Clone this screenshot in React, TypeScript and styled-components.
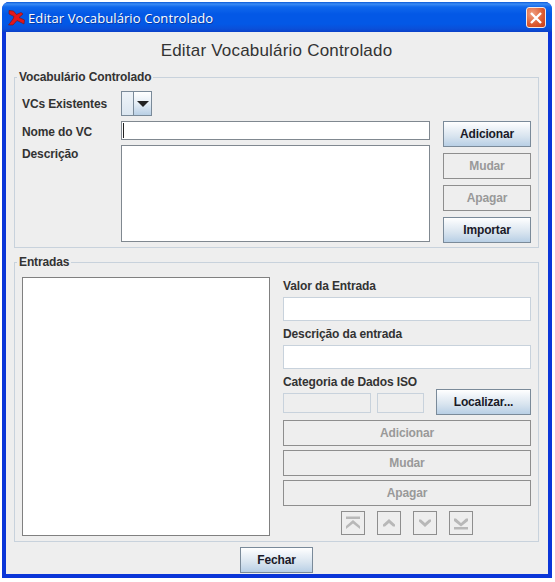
import styled, { createGlobalStyle } from "styled-components";

const GlobalStyle = createGlobalStyle`
    html, body {
        margin: 0;
        padding: 0;
        background: #ffffff;
    }
    * {
        box-sizing: border-box;
    }
`;

export default function App() {
    return (
        <Page>
            <GlobalStyle />
            <Window>
                <TitleBar>
                    <AppLogo />
                    <TitleText>Editar Vocabulário Controlado</TitleText>
                    <CloseButton>
                        <svg width="14" height="14" viewBox="0 0 14 14">
                            <path d="M2 2 L12 12 M12 2 L2 12" stroke="#fff" strokeWidth="2.4" />
                        </svg>
                    </CloseButton>
                </TitleBar>
                <Content>
                    <Heading>Editar Vocabulário Controlado</Heading>

                    <Group $height={178}>
                        <Legend>Vocabulário Controlado</Legend>
                        <VocabLayout>
                            <ComboRow>
                                <FieldLabel>VCs Existentes</FieldLabel>
                                <Combo>
                                    <ComboValue />
                                    <ComboArrow>
                                        <svg width="12" height="6" viewBox="0 0 12 6">
                                            <path d="M0 0 H12 L6 6 Z" fill="#222" />
                                        </svg>
                                    </ComboArrow>
                                </Combo>
                            </ComboRow>
                            <FormRow>
                                <FormFields>
                                    <NameRow>
                                        <FieldLabel $top={2}>Nome do VC</FieldLabel>
                                        <TextField $width={309} $height={19} $caret />
                                    </NameRow>
                                    <DescriptionRow>
                                        <FieldLabel $top={2}>Descrição</FieldLabel>
                                        <TextField $width={309} $height={97} />
                                    </DescriptionRow>
                                </FormFields>
                                <ButtonColumn>
                                    <Button $height={26}>Adicionar</Button>
                                    <Button $height={26} disabled>Mudar</Button>
                                    <Button $height={26} disabled>Apagar</Button>
                                    <Button $height={26}>Importar</Button>
                                </ButtonColumn>
                            </FormRow>
                        </VocabLayout>
                    </Group>

                    <Group $height={287} $gap={7}>
                        <Legend>Entradas</Legend>
                        <EntriesLayout>
                            <EntryList />
                            <EntryForm>
                                <EntryLabel>Valor da Entrada</EntryLabel>
                                <EntryField />
                                <EntryLabel>Descrição da entrada</EntryLabel>
                                <EntryField />
                                <EntryLabel>Categoria de Dados ISO</EntryLabel>
                                <IsoRow>
                                    <IsoField $width={88} />
                                    <IsoField $width={47} />
                                    <Button $height={26} $width={95}>Localizar...</Button>
                                </IsoRow>
                                <WideButtons>
                                    <Button $height={26} disabled>Adicionar</Button>
                                    <Button $height={26} disabled>Mudar</Button>
                                    <Button $height={26} disabled>Apagar</Button>
                                </WideButtons>
                                <MoveRow>
                                    <MoveButton disabled>
                                        <svg width="16" height="16" viewBox="0 0 16 16">
                                            <path d="M1 1.5 H15 V4 H1 Z M8 5 L15 11 V14 L8 8.5 L1 14 V11 Z" fill="#b8b8b8" />
                                        </svg>
                                    </MoveButton>
                                    <MoveButton disabled>
                                        <svg width="16" height="16" viewBox="0 0 16 16">
                                            <path d="M8 4 L14 9.5 V11.5 H12 L8 8 L4 11.5 H2 V9.5 Z" fill="#b8b8b8" />
                                        </svg>
                                    </MoveButton>
                                    <MoveButton disabled>
                                        <svg width="16" height="16" viewBox="0 0 16 16">
                                            <path d="M8 12 L14 6.5 V4.5 H12 L8 8 L4 4.5 H2 V6.5 Z" fill="#b8b8b8" />
                                        </svg>
                                    </MoveButton>
                                    <MoveButton disabled>
                                        <svg width="16" height="16" viewBox="0 0 16 16">
                                            <path d="M8 8 L13 3.5 H15 V6 L8 11.5 L1 6 V3.5 H3 Z M1 12 H15 V14.5 H1 Z" fill="#b8b8b8" />
                                        </svg>
                                    </MoveButton>
                                </MoveRow>
                            </EntryForm>
                        </EntriesLayout>
                    </Group>

                    <Footer>
                        <Button $height={26} $width={73}>Fechar</Button>
                    </Footer>
                </Content>
            </Window>
        </Page>
    );
}

function AppLogo() {
    return (
        <svg width="17" height="16" viewBox="0 0 17 16">
            <path
                d="M1 0.5 L5.5 1 L8.5 4.5 L13 2.5 L15 4 L11 7.5 L16.5 10 L16 14 L13 12.5 L9 10.5 L5 15 L0.5 15 L5 9 L6 6.5 L1 4 Z"
                fill="#e3161c"
                stroke="#701818"
                strokeWidth="0.6"
            />
        </svg>
    );
}

const Page = styled.div`
    width: 555px;
    height: 582px;
    padding: 2px 3px 4px 2px;
`;

const Window = styled.div`
    width: 550px;
    height: 576px;
    display: flex;
    flex-direction: column;
    border: solid #0a35d8;
    border-width: 0 4px 4px 4px;
    border-radius: 7px 7px 0 0;
    background: #0a35d8;
    font-family: "Liberation Sans", Arial, sans-serif;
`;

const TitleBar = styled.div`
    height: 30px;
    flex: none;
    margin: 0 -4px;
    padding: 1px 6px 0 6px;
    display: flex;
    align-items: center;
    gap: 3px;
    border-radius: 7px 7px 0 0;
    background: linear-gradient(
        180deg,
        #0a5ad8 0,
        #3c8cf4 2px,
        #1068ec 5px,
        #0358e6 12px,
        #0358e6 22px,
        #0a4fd8 27px,
        #0a3fc8 100%
    );
`;

const TitleText = styled.span`
    flex: 1;
    font-family: "Open Sans", "Liberation Sans", sans-serif;
    font-size: 13px;
    letter-spacing: 0.1px;
    color: #ffffff;
    white-space: nowrap;
    text-shadow: 1px 1px 0 #0a3aa0;
`;

const CloseButton = styled.div`
    width: 20px;
    height: 21px;
    display: flex;
    align-items: center;
    justify-content: center;
    border: 1px solid #f4e8e4;
    border-radius: 3px;
    background: radial-gradient(circle at 30% 30%, #f0a080, #dc5a30 60%, #c83c18);
`;

const Content = styled.div`
    flex: 1;
    display: flex;
    flex-direction: column;
    padding: 0 9px 0 8px;
    background: #eeeeee;
    color: #333333;
    font-size: 12px;
    font-weight: bold;
    letter-spacing: -0.12px;
`;

const Heading = styled.h1`
    margin: 0;
    height: 38px;
    line-height: 37px;
    text-align: center;
    font-size: 17px;
    font-weight: normal;
    letter-spacing: 0.2px;
    color: #333333;
`;

const Group = styled.fieldset<{ $height: number; $gap?: number }>`
    margin: ${(p) => p.$gap ?? 0}px 0 0 0;
    padding: 0 7px 0 7px;
    height: ${(p) => p.$height}px;
    min-width: 0;
    border: 1px solid #c8d2dc;
`;

const Legend = styled.legend`
    margin-left: -5px;
    padding: 0 2px 0 2px;
    font-size: 12px;
    line-height: 14px;
    color: #333333;
`;

const VocabLayout = styled.div`
    display: flex;
    flex-direction: column;
    gap: 5px;
    padding-top: 7px;
`;

const ComboRow = styled.div`
    display: flex;
    align-items: center;
    height: 25px;
`;

const FieldLabel = styled.span<{ $top?: number }>`
    width: 99px;
    flex: none;
    line-height: 14px;
    margin-top: ${(p) => p.$top ?? 0}px;
`;

const Combo = styled.div`
    width: 31px;
    height: 25px;
    display: flex;
    border: 1px solid #7a8a99;
`;

const ComboValue = styled.div`
    width: 11px;
    background: linear-gradient(180deg, #eef3f8, #dbe6f0);
`;

const ComboArrow = styled.div`
    flex: 1;
    display: flex;
    align-items: center;
    justify-content: center;
    border-left: 1px solid #7a8a99;
    background: linear-gradient(180deg, #ffffff, #e4edf5 50%, #b8cfe5);
`;

const FormRow = styled.div`
    display: flex;
    justify-content: space-between;
`;

const FormFields = styled.div`
    display: flex;
    flex-direction: column;
    gap: 5px;
`;

const NameRow = styled.div`
    display: flex;
    align-items: center;
`;

const DescriptionRow = styled.div`
    display: flex;
    align-items: flex-start;
`;

const TextField = styled.div<{ $width: number; $height: number; $caret?: boolean }>`
    position: relative;
    width: ${(p) => p.$width}px;
    height: ${(p) => p.$height}px;
    flex: none;
    background: #ffffff;
    border: 1px solid #808890;

    ${(p) =>
        p.$caret &&
        `&::before {
            content: "";
            position: absolute;
            left: 1px;
            top: 1px;
            bottom: 1px;
            width: 1px;
            background: #222222;
        }`}
`;

const EntryField = styled.div`
    height: 24px;
    flex: none;
    background: #ffffff;
    border: 1px solid #c8d2dc;
`;

const ButtonColumn = styled.div`
    width: 88px;
    display: flex;
    flex-direction: column;
    gap: 6px;
`;

const Button = styled.button<{ $height: number; $width?: number }>`
    width: ${(p) => (p.$width ? `${p.$width}px` : "100%")};
    height: ${(p) => p.$height}px;
    flex: none;
    padding: 0;
    font-family: "Liberation Sans", Arial, sans-serif;
    font-size: 12px;
    font-weight: bold;
    letter-spacing: -0.15px;
    color: #1a1a28;
    border: 1px solid #7a8a99;
    background: linear-gradient(180deg, #ffffff 0, #eef3f8 25%, #d8e4ef 60%, #b8cfe5 100%);

    &:disabled {
        color: #999999;
        border-color: #8e8e8e;
        background: #eeeeee;
    }
`;

const EntriesLayout = styled.div`
    display: flex;
    justify-content: space-between;
    padding-top: 8px;
`;

const EntryList = styled.div`
    width: 248px;
    height: 259px;
    background: #ffffff;
    border: 1px solid #808080;
`;

const EntryForm = styled.div`
    width: 248px;
    display: flex;
    flex-direction: column;
`;

const EntryLabel = styled.div`
    height: 20px;
    padding-top: 2px;
    line-height: 14px;
    margin-top: 4px;

    &:first-child {
        margin-top: 0;
    }
`;

const IsoRow = styled.div`
    display: flex;
    align-items: flex-end;
    height: 26px;
    margin-top: -4px;
`;

const IsoField = styled.div<{ $width: number }>`
    width: ${(p) => p.$width}px;
    height: 20px;
    margin-right: 6px;
    margin-bottom: 2px;
    flex: none;
    border: 1px solid #c8d2dc;
    background: #eeeeee;

    & + & {
        margin-right: 12px;
    }
`;

const WideButtons = styled.div`
    display: flex;
    flex-direction: column;
    gap: 4px;
    margin-top: 5px;
`;

const MoveRow = styled.div`
    display: flex;
    justify-content: center;
    gap: 12px;
    margin-top: 5px;
`;

const MoveButton = styled.button`
    width: 24px;
    height: 24px;
    padding: 0;
    display: flex;
    align-items: center;
    justify-content: center;
    border: 1px solid #8e8e8e;
    background: #eeeeee;
`;

const Footer = styled.div`
    display: flex;
    justify-content: center;
    margin-top: 5px;
`;
